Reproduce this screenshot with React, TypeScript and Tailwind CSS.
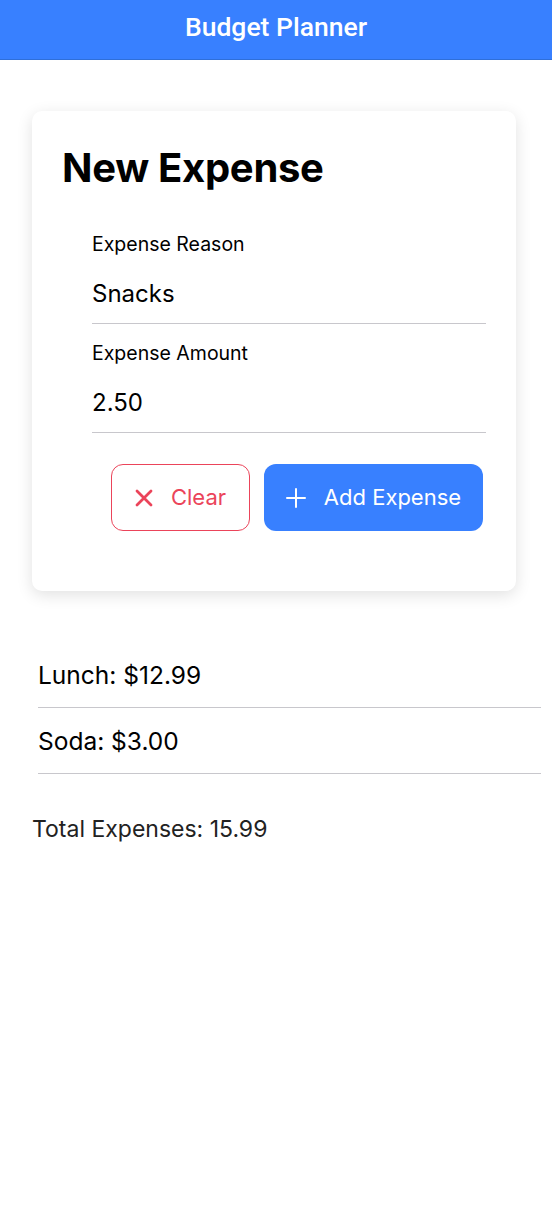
import React from "react";

const font = { fontFamily: "Inter, 'Noto Sans', sans-serif" };

const Field: React.FC<{ label: string; value: string }> = ({ label, value }) => (
  <div className="border-b border-[#c8c7cc]">
    <div className="pt-[15px] text-[19.5px] leading-[28px] text-black">{label}</div>
    <div className="pt-[20px] pb-[13px] text-[24px] leading-[32px] text-black">{value}</div>
  </div>
);

const App: React.FC = () => {
  const expenses = [
    { name: "Lunch", amount: "12.99" },
    { name: "Soda", amount: "3.00" },
  ];
  return (
    <div className="min-h-[1208px] w-[552px] bg-white" style={font}>
      <header className="h-[60px] bg-[#3880ff] border-b border-[#2f6fd9] flex items-center justify-center">
        <h1 className="text-white text-[26.5px] font-medium -mt-[5px]" style={{ fontFamily: "Roboto, sans-serif" }}>
          Budget Planner
        </h1>
      </header>

      <div className="pl-[32px] pr-[36px] pt-[51px]">
        <div className="rounded-[10px] bg-white shadow-[0_4px_16px_rgba(0,0,0,0.12)] pt-[34px] pb-[60px] pl-[30px] pr-[30px]">
          <h2 className="text-[40px] font-bold leading-[46px] text-black tracking-[-0.3px]">New Expense</h2>
          <div className="pl-[30px] mt-[24px]">
            <Field label="Expense Reason" value="Snacks" />
            <Field label="Expense Amount" value="2.50" />
          </div>
          <div className="flex justify-end gap-[14px] mt-[31px] pr-[3px]">
            <button className="h-[67px] w-[139px] rounded-[12px] border-[1.5px] border-[#eb445a] flex items-center justify-center gap-[18px] text-[#eb445a] text-[22px]">
              <svg width="18" height="18" viewBox="0 0 18 18" fill="none" stroke="#eb445a" strokeWidth="2.8" strokeLinecap="round">
                <path d="M2 2l14 14M16 2L2 16" />
              </svg>
              Clear
            </button>
            <button className="h-[67px] w-[219px] rounded-[12px] bg-[#3880ff] flex items-center justify-center gap-[18px] text-white text-[22px]">
              <svg width="20" height="20" viewBox="0 0 20 20" fill="none" stroke="white" strokeWidth="2" strokeLinecap="round">
                <path d="M10 1v18M1 10h18" />
              </svg>
              Add Expense
            </button>
          </div>
        </div>
      </div>

      <ul className="pl-[38px] pr-[11px] mt-[51px]">
        {expenses.map((e) => (
          <li key={e.name} className="h-[66px] border-b border-[#c8c7cc] flex items-center text-[24.5px] text-black pt-[1px]">
            {e.name}: ${e.amount}
          </li>
        ))}
      </ul>
      <div className="pl-[32px] mt-[38px] text-[23px] text-[#222]">Total Expenses: 15.99</div>
    </div>
  );
};

export default App;
